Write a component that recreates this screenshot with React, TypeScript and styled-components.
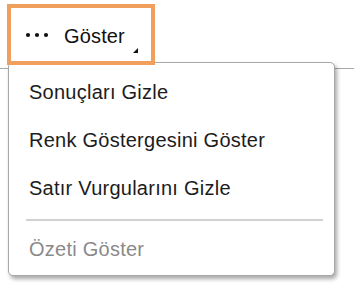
import styled, { createGlobalStyle } from "styled-components"

const GlobalStyle = createGlobalStyle`
    html, body {
        margin: 0;
        padding: 0;
        background: #ffffff;
        font-family: 'Liberation Sans', Arial, sans-serif;
    }
`

const items = [
    { label: 'Sonuçları Gizle' },
    { label: 'Renk Göstergesini Göster' },
    { label: 'Satır Vurgularını Gizle' },
]

export default function App() {
    return (
        <Page>
            <GlobalStyle />
            <Toolbar>
                <ShowButton>
                    <svg width="24" height="6" viewBox="0 0 24 6">
                        <circle cx="3" cy="3" r="2.1" fill="#111" />
                        <circle cx="12" cy="3" r="2.1" fill="#111" />
                        <circle cx="21" cy="3" r="2.1" fill="#111" />
                    </svg>
                    <ButtonLabel>Göster</ButtonLabel>
                    <Corner />
                </ShowButton>
            </Toolbar>

            <Menu>
                {items.map((item) => (
                    <MenuItem key={item.label}>{item.label}</MenuItem>
                ))}
                <Divider />
                <MenuItem $disabled>Özeti Göster</MenuItem>
            </Menu>
        </Page>
    )
}

export const Page = styled.div`
    position: relative;
    width: 354px;
    height: 287px;
    overflow: hidden;
`
export const Toolbar = styled.div`
    padding: 4px 0 3px 7px;
    border-bottom: 1px solid #a9a9a9;
`
export const ShowButton = styled.div`
    position: relative;
    z-index: 2;
    box-sizing: border-box;
    width: 148px;
    height: 61px;
    border: 4px solid #f0a05c;
    background: #ffffff;
    display: flex;
    align-items: center;
    padding: 0 0 0 14px;
    svg {
        margin-top: 1px;
    }
`
export const ButtonLabel = styled.span`
    margin-left: 15px;
    margin-top: 4px;
    font-size: 20px;
    letter-spacing: 0.15px;
    color: #111;
`
export const Corner = styled.span`
    position: absolute;
    right: 13px;
    bottom: 8px;
    width: 0;
    height: 0;
    border-left: 5px solid transparent;
    border-bottom: 5px solid #111;
`
export const Menu = styled.div`
    position: absolute;
    z-index: 1;
    top: 62px;
    left: 8px;
    box-sizing: border-box;
    width: 327px;
    height: 214px;
    padding: 6px 0 0 0;
    background: #ffffff;
    border: 1px solid #a8a8a8;
    border-radius: 5px;
    box-shadow: 2px 3px 4px rgba(0, 0, 0, 0.35);
`
export const MenuItem = styled.div<{ $disabled?: boolean }>`
    height: 48px;
    line-height: 47px;
    padding-left: 20px;
    font-size: 20px;
    letter-spacing: 0.25px;
    color: ${(p) => (p.$disabled ? '#8a8a8a' : '#1c1c1c')};
    white-space: nowrap;
`
export const Divider = styled.div`
    height: 2px;
    margin: 6px 11px 5px 17px;
    background: #d2d2d2;
`
